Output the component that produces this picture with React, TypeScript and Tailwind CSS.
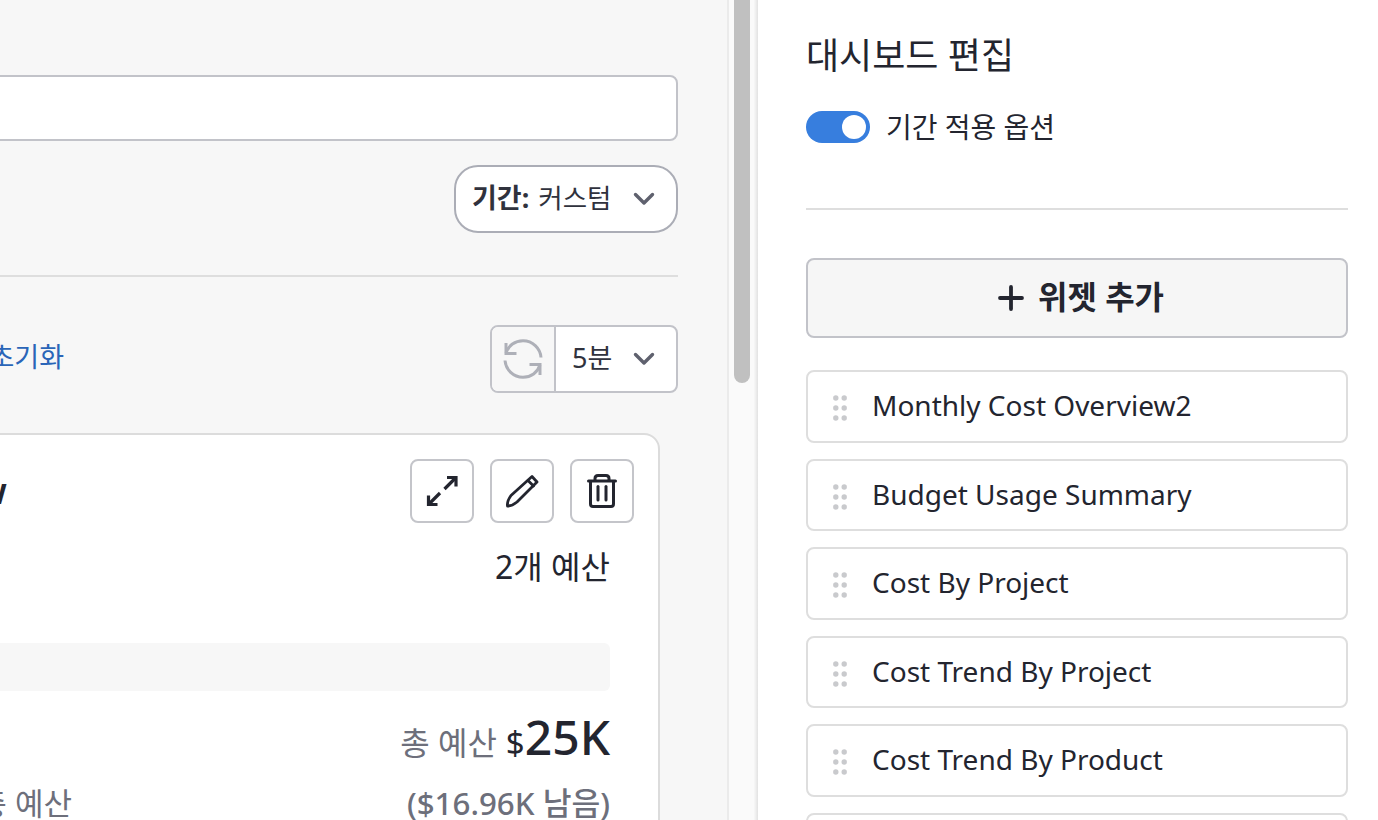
import React from "react";

const Chevron = () => (
  <svg width="24" height="24" viewBox="0 0 24 24" fill="none" stroke="#5f616e" strokeWidth="3.400" strokeLinecap="round" strokeLinejoin="round">
    <path d="M3.500 7.500 12 16l8.500-8.500" />
  </svg>
);

const Sync = () => (
  <svg width="40" height="40" viewBox="0 0 40 40" fill="none" stroke="#aeb0b8" strokeWidth="3" strokeLinecap="butt" strokeLinejoin="miter">
    <path d="M3 4v10.500H13.500" />
    <path d="M3 14C5.500 6.500 12 1.800 20 1.800c9.500 0 17.300 7.400 18 16.700" />
    <path d="M37 36V25.500H26.500" />
    <path d="M37 26c-2.500 7.500-9 12.200-17 12.200-9.500 0-17.300-7.400-18-16.700" />
  </svg>
);

const IconBtn = ({ children }: { children: React.ReactNode }) => (
  <div className="w-16 h-16 rounded-[8px] border-2 border-[#c4c5ca] bg-white flex items-center justify-center">{children}</div>
);

const Dots = () => (
  <svg width="14" height="26" viewBox="0 0 14 26" fill="#c9cacd">
    <circle cx="2.800" cy="3" r="2.700" />
    <circle cx="11.200" cy="3" r="2.700" />
    <circle cx="2.800" cy="13" r="2.700" />
    <circle cx="11.200" cy="13" r="2.700" />
    <circle cx="2.800" cy="23" r="2.700" />
    <circle cx="11.200" cy="23" r="2.700" />
  </svg>
);

const widgets = ["Monthly Cost Overview2", "Budget Usage Summary", "Cost By Project", "Cost Trend By Project", "Cost Trend By Product", "Cost By Account"];

export default function App() {
  return (
    <div className="flex h-[820px] w-[1378px] overflow-hidden bg-white text-[#23252f] font-['Noto_Sans','Noto_Sans_CJK_KR',sans-serif]">
      <main className="w-[727px] shrink-0 overflow-hidden bg-[#f7f7f7] flex justify-end">
        <div className="w-[1400px] shrink-0 pr-[49px] pt-[75px]">
          <div className="h-[66px] rounded-[8px] border-2 border-[#c2c3c9] bg-white" />
          <div className="flex justify-end mt-6">
            <div className="h-[68px] w-[224px] rounded-[24px] border-2 border-[#abadb6] bg-white flex items-center pl-4 pr-[20px] justify-between">
              <span className="text-[27px] leading-none whitespace-nowrap text-[#30323d] pb-[3px]">
                <b className="font-bold">기간:</b> <span className="ml-[2px] text-[26.500px]">커스텀</span>
              </span>
              <Chevron />
            </div>
          </div>
          <div className="h-[2px] bg-[#dedede] mt-[42px]" />
          <div className="flex items-center justify-end mt-[48px] h-[68px]">
            <div className="mr-[426px] pb-1 text-[27px] text-[#2a65b8] whitespace-nowrap">초기화</div>
            <div className="h-[68px] w-[188px] rounded-[8px] border-2 border-[#c2c3c9] bg-white flex overflow-hidden">
              <div className="w-[64px] shrink-0 bg-[#f7f7f7] border-r-2 border-[#c2c3c9] flex items-center justify-center">
                <Sync />
              </div>
              <div className="flex-1 flex items-center justify-between pl-4 pr-[20px]">
                <span className="text-[27px] leading-none pb-[3px] text-[#30323d]">5분</span>
                <Chevron />
              </div>
            </div>
          </div>
          <div className="mt-10 mr-[18px] rounded-t-[16px] border-2 border-[#dcdcdc] bg-white h-[500px] pl-[20px] pr-[24px] pt-[24px]">
            <div className="flex items-center justify-end h-16">
              <div className="mr-[403px] text-[36px] font-semibold whitespace-nowrap">Monthly Cost Overview</div>
              <div className="flex gap-4">
                <IconBtn>
                  <svg width="32" height="32" viewBox="0 0 32 32" fill="none" stroke="#23252f" strokeWidth="3.200">
                    <path d="M21 2.500H30V11.500" />
                    <path d="M29.500 3 18.500 14" />
                    <path d="M2.500 20.500V29.500H11.500" />
                    <path d="M3 29 14 18" />
                  </svg>
                </IconBtn>
                <IconBtn>
                  <svg width="34" height="34" viewBox="0 0 34 34" fill="none" stroke="#23252f" strokeWidth="2.800" strokeLinejoin="round" strokeLinecap="round">
                    <path d="M27 2.500 32 8 12 28C9 30.500 5 32 2.500 32 2 29 3.500 25 6 21.500Z" />
                    <path d="M23 6.500 28.500 12" />
                  </svg>
                </IconBtn>
                <IconBtn>
                  <svg width="30" height="34" viewBox="0 0 30 34" fill="none" stroke="#23252f" strokeWidth="3" strokeLinecap="round" strokeLinejoin="round">
                    <path d="M1.500 7H28.500" />
                    <path d="M8 6.500V4.500C8 2.800 9 1.500 11 1.500H19C21 1.500 22 2.800 22 4.500V6.500" />
                    <path d="M3.500 7.500V30c0 1.500 1 2.500 2.500 2.500H24c1.500 0 2.500-1 2.500-2.500V7.500" />
                    <path d="M11 12.500V26" />
                    <path d="M19 12.500V26" />
                  </svg>
                </IconBtn>
              </div>
            </div>
            <div className="pr-6">
              <div className="flex justify-end mt-[22px] text-[32px] leading-[44px] whitespace-nowrap">2개 예산</div>
              <div className="h-12 mt-[54px] rounded-[6px] bg-[#f7f7f7]" />
              <div className="flex justify-end items-baseline mt-[22px] h-[60px] whitespace-nowrap">
                <span className="text-[32px] text-[#6d6f7b]">총 예산</span>
                <span className="text-[33px] ml-[9px]">$</span>
                <span className="text-[48px] font-medium leading-none">25K</span>
              </div>
              <div className="flex justify-end items-center mt-[7px] text-[#6d6f7b] whitespace-nowrap">
                <span className="mr-[335px] text-[31px]">남은 총 예산</span>
                <span className="font-medium text-[31.300px]">($16.96K 남음)</span>
              </div>
            </div>
          </div>
        </div>
      </main>

      <div className="w-[27px] shrink-0 bg-[#fafafa] border-l-2 border-[#ebebeb] pl-[5px]">
        <div className="w-4 h-[383px] rounded-b-[8px] bg-[#c0c0c0]" />
      </div>
      <div className="w-1 shrink-0 bg-gradient-to-r from-[#f8f8f8] to-[#e2e2e2]" />

      <aside className="flex-1 pl-[48px] pr-[30px] pt-[30px]">
        <h2 className="text-[36px] leading-[52px] font-normal">대시보드 편집</h2>
        <div className="flex items-center gap-4 mt-[29px] h-8">
          <div className="w-16 h-8 rounded-full bg-[#377ede] flex items-center justify-end pr-1">
            <div className="w-6 h-6 rounded-full bg-white" />
          </div>
          <span className="text-[28px] leading-8 pb-[1px]">기간 적용 옵션</span>
        </div>
        <div className="h-[2px] bg-[#dedede] mt-[65px]" />
        <div className="h-20 mt-12 rounded-[8px] border-2 border-[#c2c3c9] bg-[#f6f6f6] flex items-center justify-center gap-[14px] pl-2">
          <svg width="26" height="26" viewBox="0 0 26 26" fill="none" stroke="#23252f" strokeWidth="3.800" strokeLinecap="round">
            <path d="M13 2V24" />
            <path d="M2 13H24" />
          </svg>
          <span className="text-[32px] font-bold leading-none pb-[3px]">위젯 추가</span>
        </div>
        <div className="flex flex-col gap-4 mt-8">
          {widgets.map((w) => (
            <div key={w} className="h-[72.500px] shrink-0 rounded-[8px] border-2 border-[#dedede] bg-white flex items-center pl-[25px] gap-[25px]">
              <span className="mt-1 flex"><Dots /></span>
              <span className="text-[28px] leading-none pb-[2px]">{w}</span>
            </div>
          ))}
        </div>
      </aside>
    </div>
  );
}
